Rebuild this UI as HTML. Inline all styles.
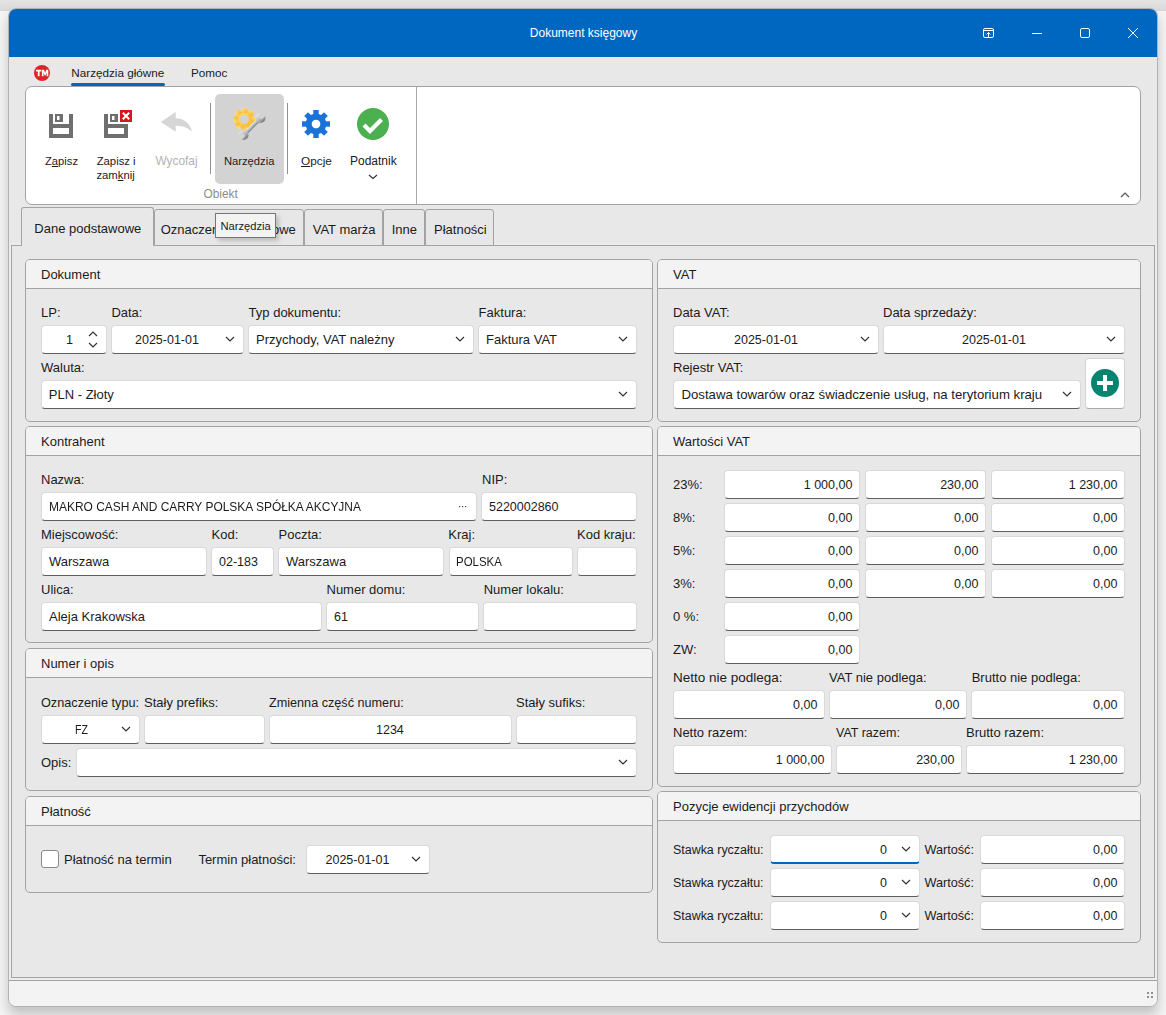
<!DOCTYPE html><html><head><meta charset="utf-8"><style>
*{margin:0;padding:0;box-sizing:border-box}
html,body{width:1166px;height:1015px;overflow:hidden;background:#f4f4f4;font-family:"Liberation Sans", sans-serif;color:#1b1b1b}
.t{position:absolute;white-space:nowrap;line-height:16px}
.a{position:absolute}
.ic{position:absolute;line-height:0}
.inp{position:absolute;background:#fff;border:1px solid #d9d9d9;border-bottom:1px solid #5e5e5e;border-radius:4px}
.inp.focus{border-bottom:2px solid #0067c0}
.grp{position:absolute;border:1px solid #a3a3a3;border-radius:5px;background:#e8e8e8;overflow:hidden}
.gh{position:absolute;left:0;top:0;right:0;height:29px;background:#f3f3f3;border-bottom:1px solid #a3a3a3}
</style></head><body>
<div class="a" style="left:0;top:0;width:1166px;height:11px;background:linear-gradient(180deg,#e4e4e4,#dadada);border-bottom:1px solid #d6d6d6"></div>
<div class="a" style="left:8px;top:8px;width:1150px;height:999px;background:#e8e8e8;border:1px solid #b2b2b2;border-radius:8px;overflow:hidden;box-shadow:0 8px 12px rgba(0,0,0,0.2)"><div class="a" style="left:0;top:0;width:1148px;height:48px;background:#0067c0"></div><div class="a" style="left:0;top:971px;width:1148px;height:1px;background:#a3a3a3"></div><div class="a" style="left:0;top:972px;width:1148px;height:26px;background:#f3f3f3"></div></div>
<div class="t " style="left:529.8px;top:25px;font-size:12px;color:#fff;">Dokument księgowy</div>
<svg class="a" style="left:975px;top:20px" width="170" height="26" viewBox="975 20 170 26">
<g fill="none" stroke="#fff" stroke-width="1">
<rect x="983.5" y="28.5" width="10" height="9" rx="1.5"/>
<path d="M984 30.5 H993"/>
<path d="M988.5 37 V32.5 M986.5 34.5 L988.5 32.5 L990.5 34.5"/>
<path d="M1032 33.5 H1042"/>
<rect x="1080.5" y="28.5" width="9" height="9" rx="1.5"/>
<path d="M1128 28 L1138 38 M1138 28 L1128 38"/>
</g></svg>
<svg class="a" style="left:32px;top:63px" width="20" height="20" viewBox="32 63 20 20"><circle cx="42" cy="73" r="8" fill="#e02328"/><path fill="#fff" d="M36 69.7 H41.3 V71.4 H39.6 V76.2 H37.8 V71.4 H36 Z M41.9 69.7 H44 L45.1 73 L46.2 69.7 H48.3 V76.2 H46.7 V72.3 L45.6 75.6 H44.6 L43.5 72.3 V76.2 H41.9 Z"/></svg>
<div class="t " style="left:71.3px;top:65px;font-size:11.7px;">Narzędzia główne</div>
<div class="a" style="left:71px;top:83px;width:94px;height:3px;border-radius:2px;background:#0067c0"></div>
<div class="t " style="left:191px;top:65px;font-size:11.7px;">Pomoc</div>
<div class="a" style="left:25px;top:86px;width:1116px;height:119px;background:#fff;border:1px solid #a3a3a3;border-radius:7px"></div>
<div class="a" style="left:416px;top:87px;width:1px;height:117px;background:#a9a9a9"></div>
<div class="a" style="left:215px;top:94px;width:69px;height:90px;background:#d3d3d3;border-radius:5px"></div>
<div class="a" style="left:210px;top:103px;width:1px;height:71px;background:#8f8f8f"></div>
<div class="a" style="left:287px;top:103px;width:1px;height:71px;background:#8f8f8f"></div>
<svg class="a" style="left:40px;top:100px" width="360" height="90" viewBox="40 100 360 90">
<g fill="#6f6f6f">
<path d="M49 114 H53 V124 H69 V114 H73 V138 H49 Z M53 128 V134 H69 V128 Z"/>
<path d="M55 114 H63 V122 H55 Z M57 116 V120 H59.5 V116 Z" fill-rule="evenodd"/>
<path d="M104 114 H108 V124 H128 V138 H104 Z M108 128 V134 H124 V128 Z" fill-rule="evenodd"/>
<path d="M110 114 H118 V122 H110 Z M112 116 V120 H114.5 V116 Z" fill-rule="evenodd"/>
</g>
<rect x="120" y="110" width="12" height="12" fill="#d9141b"/>
<path d="M122.8 112.8 L129.2 119.2 M129.2 112.8 L122.8 119.2" stroke="#fff" stroke-width="2"/>
<path d="M160.8 122 L175.7 112.1 V118.3 C183.5 118.3 190 123 192.2 131.8 C188 127.8 183 125.8 175.7 125.8 V131.7 Z" fill="#d6d6d6"/>
<g transform="translate(316 124)" fill="#1a73d6"><path d="M0 -10.3 A10.3 10.3 0 1 1 -0.01 -10.3 Z M0 -4.3 A4.3 4.3 0 1 0 0.01 -4.3 Z" fill-rule="evenodd"/><rect x="-2.7" y="-14" width="5.4" height="6" transform="rotate(0)"/><rect x="-2.7" y="-14" width="5.4" height="6" transform="rotate(45)"/><rect x="-2.7" y="-14" width="5.4" height="6" transform="rotate(90)"/><rect x="-2.7" y="-14" width="5.4" height="6" transform="rotate(135)"/><rect x="-2.7" y="-14" width="5.4" height="6" transform="rotate(180)"/><rect x="-2.7" y="-14" width="5.4" height="6" transform="rotate(225)"/><rect x="-2.7" y="-14" width="5.4" height="6" transform="rotate(270)"/><rect x="-2.7" y="-14" width="5.4" height="6" transform="rotate(315)"/></g>
<circle cx="373" cy="124" r="16" fill="#4caf50"/>
<path d="M364 125 L370 131 L381.5 119.5" fill="none" stroke="#fff" stroke-width="4.2"/>
<path d="M369 175 L373 178.5 L377 175" fill="none" stroke="#333" stroke-width="1.2"/>
</g></svg>
<svg class="a" style="left:228px;top:104px" width="40" height="40" viewBox="228 104 40 40">
<defs>
<linearGradient id="gg" x1="0" y1="0" x2="1" y2="1"><stop offset="0" stop-color="#fee28e"/><stop offset="1" stop-color="#f6b41c"/></linearGradient>
<linearGradient id="wr" x1="0" y1="0" x2="0" y2="1"><stop offset="0" stop-color="#e6e6e6"/><stop offset="0.55" stop-color="#b8b8b8"/><stop offset="1" stop-color="#6f777e"/></linearGradient>
</defs>
<g transform="translate(244.5 119.4)" fill="url(#gg)">
<circle r="9.3"/><rect x="-2.9" y="-11.4" width="5.8" height="5" rx="1.5" transform="rotate(0)"/><rect x="-2.9" y="-11.4" width="5.8" height="5" rx="1.5" transform="rotate(45)"/><rect x="-2.9" y="-11.4" width="5.8" height="5" rx="1.5" transform="rotate(90)"/><rect x="-2.9" y="-11.4" width="5.8" height="5" rx="1.5" transform="rotate(135)"/><rect x="-2.9" y="-11.4" width="5.8" height="5" rx="1.5" transform="rotate(180)"/><rect x="-2.9" y="-11.4" width="5.8" height="5" rx="1.5" transform="rotate(225)"/><rect x="-2.9" y="-11.4" width="5.8" height="5" rx="1.5" transform="rotate(270)"/><rect x="-2.9" y="-11.4" width="5.8" height="5" rx="1.5" transform="rotate(315)"/>
<circle r="4.4" fill="#d3d3d3"/>
</g>
<g transform="translate(252 126.5) rotate(-45)">
<g fill="url(#wr)">
<rect x="-10" y="-2" width="20" height="4"/>
<circle cx="-12" cy="0" r="5"/>
<circle cx="12" cy="0" r="5"/>
</g>
<g fill="#d3d3d3">
<rect x="-18" y="-2" width="6.5" height="4" rx="1"/>
<rect x="11.5" y="-2" width="6.5" height="4" rx="1"/>
</g>
</g>
</svg>
<div class="t " style="left:45px;top:153px;font-size:11.2px;">Z<span style="text-decoration:underline;text-underline-offset:1px">a</span>pisz</div>
<div class="t " style="left:96.7px;top:153px;font-size:11.3px;">Zapisz i</div>
<div class="t " style="left:96.4px;top:167px;font-size:11.3px;">zam<span style="text-decoration:underline;text-underline-offset:1px">k</span>nij</div>
<div class="t " style="left:155.4px;top:153px;font-size:11.9px;color:#b3b3b3;">Wycofaj</div>
<div class="t " style="left:224px;top:153px;font-size:11.2px;">Narzędzia</div>
<div class="t " style="left:301px;top:153px;font-size:11.8px;"><span style="text-decoration:underline;text-underline-offset:1px">O</span>pcje</div>
<div class="t " style="left:350px;top:153px;font-size:12px;">Podatnik</div>
<div class="t " style="left:203.5px;top:186px;font-size:11.9px;color:#8c8c8c;">Obiekt</div>
<svg class="a" style="left:1118px;top:188px" width="14" height="12" viewBox="1118 188 14 12"><path d="M1121 197 L1125 193 L1129 197" fill="none" stroke="#555" stroke-width="1.2"/></svg>
<div class="a" style="left:11px;top:245px;width:1144px;height:733px;border:1px solid #a3a3a3;background:#e8e8e8;box-shadow:0 0 0 2px #ededed"></div>
<div class="a" style="left:154px;top:209px;width:150px;height:37px;border:1px solid #a3a3a3;border-radius:3px 3px 0 0;background:#e7e7e7"></div>
<div class="t " style="left:160.7px;top:222px;font-size:13px;">Oznaczenia dodatkowe</div>
<div class="a" style="left:304px;top:209px;width:79px;height:37px;border:1px solid #a3a3a3;border-radius:3px 3px 0 0;background:#e7e7e7"></div>
<div class="t " style="left:312.7px;top:222px;font-size:13px;">VAT marża</div>
<div class="a" style="left:383px;top:209px;width:42px;height:37px;border:1px solid #a3a3a3;border-radius:3px 3px 0 0;background:#e7e7e7"></div>
<div class="t " style="left:391.7px;top:222px;font-size:13px;">Inne</div>
<div class="a" style="left:425px;top:209px;width:69px;height:37px;border:1px solid #a3a3a3;border-radius:3px 3px 0 0;background:#e7e7e7"></div>
<div class="t " style="left:434px;top:222px;font-size:13px;">Płatności</div>
<div class="a" style="left:21px;top:207px;width:133px;height:39px;border:1px solid #a3a3a3;border-bottom:none;border-radius:3px 3px 0 0;background:#e8e8e8"></div>
<div class="a" style="left:22px;top:245px;width:131px;height:1px;background:#e8e8e8"></div>
<div class="t " style="left:34.3px;top:221px;font-size:13px;">Dane podstawowe</div>
<div class="grp" style="left:25px;top:259px;width:628px;height:163px"><div class="gh"></div></div>
<div class="t " style="left:41px;top:267px;font-size:13px;">Dokument</div>
<div class="grp" style="left:25px;top:426px;width:628px;height:217px"><div class="gh"></div></div>
<div class="t " style="left:41px;top:434px;font-size:13px;">Kontrahent</div>
<div class="grp" style="left:25px;top:648px;width:628px;height:143px"><div class="gh"></div></div>
<div class="t " style="left:41px;top:656px;font-size:13px;">Numer i opis</div>
<div class="grp" style="left:25px;top:796px;width:628px;height:97px"><div class="gh"></div></div>
<div class="t " style="left:41px;top:804px;font-size:13px;">Płatność</div>
<div class="grp" style="left:657px;top:259px;width:484px;height:163px"><div class="gh"></div></div>
<div class="t " style="left:673px;top:267px;font-size:13px;">VAT</div>
<div class="grp" style="left:657px;top:426px;width:484px;height:361px"><div class="gh"></div></div>
<div class="t " style="left:673px;top:434px;font-size:13px;">Wartości VAT</div>
<div class="grp" style="left:657px;top:791px;width:484px;height:152px"><div class="gh"></div></div>
<div class="t " style="left:673px;top:799px;font-size:13px;">Pozycje ewidencji przychodów</div>
<div class="t " style="left:41px;top:305px;font-size:13px;">LP:</div>
<div class="t " style="left:111.4px;top:305px;font-size:13px;">Data:</div>
<div class="t " style="left:248.6px;top:305px;font-size:13px;">Typ dokumentu:</div>
<div class="t " style="left:478.6px;top:305px;font-size:13px;">Faktura:</div>
<div class="inp" style="left:41px;top:325px;width:66px;height:29px"></div>
<div class="t " style="left:-127px;top:332px;font-size:12.5px;width:200px;text-align:right;">1</div>
<svg class="a" style="left:86px;top:329px" width="14" height="22" viewBox="86 329 14 22"><path d="M89 336 L93 332 L97 336 M89 343 L93 347 L97 343" fill="none" stroke="#333" stroke-width="1.2"/></svg>
<div class="inp" style="left:111px;top:325px;width:133px;height:29px"></div>
<div class="t " style="left:135px;top:332px;font-size:12.5px;">2025-01-01</div>
<div class="ic" style="left:225px;top:336.0px"><svg width="10" height="6" viewBox="0 0 10 6"><path d="M1 1 L5 5 L9 1" fill="none" stroke="#333" stroke-width="1.2"/></svg></div>
<div class="inp" style="left:248px;top:325px;width:226px;height:29px"></div>
<div class="t " style="left:256px;top:332px;font-size:13px;">Przychody, VAT należny</div>
<div class="ic" style="left:455px;top:336.0px"><svg width="10" height="6" viewBox="0 0 10 6"><path d="M1 1 L5 5 L9 1" fill="none" stroke="#333" stroke-width="1.2"/></svg></div>
<div class="inp" style="left:478px;top:325px;width:159px;height:29px"></div>
<div class="t " style="left:486px;top:332px;font-size:13px;">Faktura VAT</div>
<div class="ic" style="left:618px;top:336.0px"><svg width="10" height="6" viewBox="0 0 10 6"><path d="M1 1 L5 5 L9 1" fill="none" stroke="#333" stroke-width="1.2"/></svg></div>
<div class="t " style="left:41px;top:360px;font-size:13px;">Waluta:</div>
<div class="inp" style="left:41px;top:380px;width:596px;height:29px"></div>
<div class="t " style="left:48.8px;top:387px;font-size:13px;">PLN - Złoty</div>
<div class="ic" style="left:618px;top:391.0px"><svg width="10" height="6" viewBox="0 0 10 6"><path d="M1 1 L5 5 L9 1" fill="none" stroke="#333" stroke-width="1.2"/></svg></div>
<div class="t " style="left:41px;top:472px;font-size:13px;">Nazwa:</div>
<div class="t " style="left:482px;top:472px;font-size:13px;">NIP:</div>
<div class="inp" style="left:41px;top:492px;width:436px;height:29px"></div>
<div class="t " style="left:49px;top:499px;font-size:13px;transform:scaleX(0.92);transform-origin:0 0;">MAKRO CASH AND CARRY POLSKA SPÓŁKA AKCYJNA</div>
<svg class="a" style="left:455px;top:503px" width="14" height="6" viewBox="455 503 14 6"><g fill="#444"><rect x="459" y="506" width="1.2" height="1.2"/><rect x="462" y="506" width="1.2" height="1.2"/><rect x="465" y="506" width="1.2" height="1.2"/></g></svg>
<div class="inp" style="left:481px;top:492px;width:156px;height:29px"></div>
<div class="t " style="left:489px;top:499px;font-size:12.5px;">5220002860</div>
<div class="t " style="left:41px;top:527px;font-size:13px;">Miejscowość:</div>
<div class="t " style="left:211.5px;top:527px;font-size:13px;">Kod:</div>
<div class="t " style="left:278.5px;top:527px;font-size:13px;">Poczta:</div>
<div class="t " style="left:448.3px;top:527px;font-size:13px;">Kraj:</div>
<div class="t " style="left:577px;top:527px;font-size:13px;">Kod kraju:</div>
<div class="inp" style="left:41px;top:547px;width:166px;height:29px"></div>
<div class="t " style="left:49px;top:554px;font-size:13px;">Warszawa</div>
<div class="inp" style="left:211px;top:547px;width:63px;height:29px"></div>
<div class="t " style="left:219px;top:554px;font-size:12.5px;">02-183</div>
<div class="inp" style="left:278px;top:547px;width:166px;height:29px"></div>
<div class="t " style="left:286px;top:554px;font-size:13px;">Warszawa</div>
<div class="inp" style="left:449px;top:547px;width:124px;height:29px"></div>
<div class="t " style="left:456px;top:554px;font-size:13px;transform:scaleX(0.88);transform-origin:0 0;">POLSKA</div>
<div class="inp" style="left:577px;top:547px;width:60px;height:29px"></div>
<div class="t " style="left:41px;top:582px;font-size:13px;">Ulica:</div>
<div class="t " style="left:326.5px;top:582px;font-size:13px;">Numer domu:</div>
<div class="t " style="left:483.7px;top:582px;font-size:13px;">Numer lokalu:</div>
<div class="inp" style="left:41px;top:602px;width:281px;height:29px"></div>
<div class="t " style="left:49px;top:609px;font-size:13px;">Aleja Krakowska</div>
<div class="inp" style="left:326px;top:602px;width:153px;height:29px"></div>
<div class="t " style="left:334px;top:609px;font-size:12.5px;">61</div>
<div class="inp" style="left:483px;top:602px;width:154px;height:29px"></div>
<div class="t " style="left:41px;top:695px;font-size:12.7px;">Oznaczenie typu:</div>
<div class="t " style="left:144px;top:695px;font-size:13px;">Stały prefiks:</div>
<div class="t " style="left:269px;top:695px;font-size:12.65px;">Zmienna część numeru:</div>
<div class="t " style="left:516px;top:695px;font-size:13px;">Stały sufiks:</div>
<div class="inp" style="left:41px;top:715px;width:99px;height:29px"></div>
<div class="t " style="left:75px;top:722px;font-size:13px;transform:scaleX(0.81);transform-origin:0 0;">FZ</div>
<div class="ic" style="left:121px;top:726.0px"><svg width="10" height="6" viewBox="0 0 10 6"><path d="M1 1 L5 5 L9 1" fill="none" stroke="#333" stroke-width="1.2"/></svg></div>
<div class="inp" style="left:144px;top:715px;width:121px;height:29px"></div>
<div class="inp" style="left:269px;top:715px;width:243px;height:29px"></div>
<div class="t " style="left:376px;top:722px;font-size:12.5px;">1234</div>
<div class="inp" style="left:516px;top:715px;width:121px;height:29px"></div>
<div class="t " style="left:41px;top:755px;font-size:13px;">Opis:</div>
<div class="inp" style="left:76px;top:748px;width:561px;height:29px"></div>
<div class="ic" style="left:618px;top:759.0px"><svg width="10" height="6" viewBox="0 0 10 6"><path d="M1 1 L5 5 L9 1" fill="none" stroke="#333" stroke-width="1.2"/></svg></div>
<div class="a" style="left:41px;top:850px;width:18px;height:18px;border:1px solid #8a8a8a;border-radius:3px;background:#fff"></div>
<div class="t " style="left:64px;top:852px;font-size:13px;">Płatność na termin</div>
<div class="t " style="left:198.4px;top:852px;font-size:13px;">Termin płatności:</div>
<div class="inp" style="left:306px;top:845px;width:124px;height:29px"></div>
<div class="t " style="left:325.5px;top:852px;font-size:12.5px;">2025-01-01</div>
<div class="ic" style="left:411px;top:856.0px"><svg width="10" height="6" viewBox="0 0 10 6"><path d="M1 1 L5 5 L9 1" fill="none" stroke="#333" stroke-width="1.2"/></svg></div>
<div class="t " style="left:673px;top:305px;font-size:13px;">Data VAT:</div>
<div class="t " style="left:883px;top:305px;font-size:13px;">Data sprzedaży:</div>
<div class="inp" style="left:673px;top:325px;width:206px;height:29px"></div>
<div class="t " style="left:734px;top:332px;font-size:12.5px;">2025-01-01</div>
<div class="ic" style="left:860px;top:336.0px"><svg width="10" height="6" viewBox="0 0 10 6"><path d="M1 1 L5 5 L9 1" fill="none" stroke="#333" stroke-width="1.2"/></svg></div>
<div class="inp" style="left:883px;top:325px;width:242px;height:29px"></div>
<div class="t " style="left:962px;top:332px;font-size:12.5px;">2025-01-01</div>
<div class="ic" style="left:1106px;top:336.0px"><svg width="10" height="6" viewBox="0 0 10 6"><path d="M1 1 L5 5 L9 1" fill="none" stroke="#333" stroke-width="1.2"/></svg></div>
<div class="t " style="left:673px;top:360px;font-size:13px;">Rejestr VAT:</div>
<div class="inp" style="left:673px;top:380px;width:408px;height:29px"></div>
<div class="t " style="left:681.5px;top:387px;font-size:13.2px;">Dostawa towarów oraz świadczenie usług, na terytorium kraju</div>
<div class="ic" style="left:1062px;top:391.0px"><svg width="10" height="6" viewBox="0 0 10 6"><path d="M1 1 L5 5 L9 1" fill="none" stroke="#333" stroke-width="1.2"/></svg></div>
<div class="a" style="left:1085px;top:358px;width:40px;height:51px;background:#fff;border:1px solid #d3d3d3;border-bottom-color:#a9a9a9;border-radius:4px"></div>
<svg class="a" style="left:1090px;top:368px" width="30" height="30" viewBox="1090 368 30 30"><circle cx="1105" cy="383" r="14" fill="#06846f"/><path d="M1105 375 V391 M1097 383 H1113" stroke="#fff" stroke-width="4"/></svg>
<div class="t " style="left:673px;top:477px;font-size:13px;">23%:</div>
<div class="inp" style="left:724px;top:470px;width:136px;height:29px"></div>
<div class="t " style="left:652.4px;top:477px;font-size:12.5px;width:200px;text-align:right;">1 000,00</div>
<div class="inp" style="left:865px;top:470px;width:121px;height:29px"></div>
<div class="t " style="left:778.4px;top:477px;font-size:12.5px;width:200px;text-align:right;">230,00</div>
<div class="inp" style="left:991px;top:470px;width:134px;height:29px"></div>
<div class="t " style="left:917.4000000000001px;top:477px;font-size:12.5px;width:200px;text-align:right;">1 230,00</div>
<div class="t " style="left:673px;top:510px;font-size:13px;">8%:</div>
<div class="inp" style="left:724px;top:503px;width:136px;height:29px"></div>
<div class="t " style="left:652.4px;top:510px;font-size:12.5px;width:200px;text-align:right;">0,00</div>
<div class="inp" style="left:865px;top:503px;width:121px;height:29px"></div>
<div class="t " style="left:778.4px;top:510px;font-size:12.5px;width:200px;text-align:right;">0,00</div>
<div class="inp" style="left:991px;top:503px;width:134px;height:29px"></div>
<div class="t " style="left:917.4000000000001px;top:510px;font-size:12.5px;width:200px;text-align:right;">0,00</div>
<div class="t " style="left:673px;top:543px;font-size:13px;">5%:</div>
<div class="inp" style="left:724px;top:536px;width:136px;height:29px"></div>
<div class="t " style="left:652.4px;top:543px;font-size:12.5px;width:200px;text-align:right;">0,00</div>
<div class="inp" style="left:865px;top:536px;width:121px;height:29px"></div>
<div class="t " style="left:778.4px;top:543px;font-size:12.5px;width:200px;text-align:right;">0,00</div>
<div class="inp" style="left:991px;top:536px;width:134px;height:29px"></div>
<div class="t " style="left:917.4000000000001px;top:543px;font-size:12.5px;width:200px;text-align:right;">0,00</div>
<div class="t " style="left:673px;top:576px;font-size:13px;">3%:</div>
<div class="inp" style="left:724px;top:569px;width:136px;height:29px"></div>
<div class="t " style="left:652.4px;top:576px;font-size:12.5px;width:200px;text-align:right;">0,00</div>
<div class="inp" style="left:865px;top:569px;width:121px;height:29px"></div>
<div class="t " style="left:778.4px;top:576px;font-size:12.5px;width:200px;text-align:right;">0,00</div>
<div class="inp" style="left:991px;top:569px;width:134px;height:29px"></div>
<div class="t " style="left:917.4000000000001px;top:576px;font-size:12.5px;width:200px;text-align:right;">0,00</div>
<div class="t " style="left:673px;top:609px;font-size:13px;">0 %:</div>
<div class="inp" style="left:724px;top:602px;width:136px;height:29px"></div>
<div class="t " style="left:652.4px;top:609px;font-size:12.5px;width:200px;text-align:right;">0,00</div>
<div class="t " style="left:673px;top:642px;font-size:13px;">ZW:</div>
<div class="inp" style="left:724px;top:635px;width:136px;height:29px"></div>
<div class="t " style="left:652.4px;top:642px;font-size:12.5px;width:200px;text-align:right;">0,00</div>
<div class="t " style="left:673px;top:670px;font-size:13.5px;">Netto nie podlega:</div>
<div class="t " style="left:829px;top:670px;font-size:13px;">VAT nie podlega:</div>
<div class="t " style="left:971.7px;top:670px;font-size:13px;">Brutto nie podlega:</div>
<div class="inp" style="left:673px;top:690px;width:152px;height:29px"></div>
<div class="t " style="left:617.4px;top:697px;font-size:12.5px;width:200px;text-align:right;">0,00</div>
<div class="inp" style="left:829px;top:690px;width:138px;height:29px"></div>
<div class="t " style="left:759.4px;top:697px;font-size:12.5px;width:200px;text-align:right;">0,00</div>
<div class="inp" style="left:971px;top:690px;width:154px;height:29px"></div>
<div class="t " style="left:917.4000000000001px;top:697px;font-size:12.5px;width:200px;text-align:right;">0,00</div>
<div class="t " style="left:673px;top:725px;font-size:13px;">Netto razem:</div>
<div class="t " style="left:836px;top:725px;font-size:12.5px;">VAT razem:</div>
<div class="t " style="left:966px;top:725px;font-size:13px;">Brutto razem:</div>
<div class="inp" style="left:673px;top:745px;width:159px;height:29px"></div>
<div class="t " style="left:624.4px;top:752px;font-size:12.5px;width:200px;text-align:right;">1 000,00</div>
<div class="inp" style="left:836px;top:745px;width:126px;height:29px"></div>
<div class="t " style="left:754.4px;top:752px;font-size:12.5px;width:200px;text-align:right;">230,00</div>
<div class="inp" style="left:966px;top:745px;width:159px;height:29px"></div>
<div class="t " style="left:917.4000000000001px;top:752px;font-size:12.5px;width:200px;text-align:right;">1 230,00</div>
<div class="t " style="left:673px;top:842px;font-size:12.45px;">Stawka ryczałtu:</div>
<div class="inp focus" style="left:770px;top:835px;width:150px;height:29px"></div>
<div class="t " style="left:687px;top:842px;font-size:12.5px;width:200px;text-align:right;">0</div>
<div class="ic" style="left:901px;top:846.0px"><svg width="10" height="6" viewBox="0 0 10 6"><path d="M1 1 L5 5 L9 1" fill="none" stroke="#333" stroke-width="1.2"/></svg></div>
<div class="t " style="left:924.4px;top:842px;font-size:12.7px;">Wartość:</div>
<div class="inp" style="left:980px;top:835px;width:145px;height:29px"></div>
<div class="t " style="left:917.4000000000001px;top:842px;font-size:12.5px;width:200px;text-align:right;">0,00</div>
<div class="t " style="left:673px;top:875px;font-size:12.45px;">Stawka ryczałtu:</div>
<div class="inp" style="left:770px;top:868px;width:150px;height:29px"></div>
<div class="t " style="left:687px;top:875px;font-size:12.5px;width:200px;text-align:right;">0</div>
<div class="ic" style="left:901px;top:879.0px"><svg width="10" height="6" viewBox="0 0 10 6"><path d="M1 1 L5 5 L9 1" fill="none" stroke="#333" stroke-width="1.2"/></svg></div>
<div class="t " style="left:924.4px;top:875px;font-size:12.7px;">Wartość:</div>
<div class="inp" style="left:980px;top:868px;width:145px;height:29px"></div>
<div class="t " style="left:917.4000000000001px;top:875px;font-size:12.5px;width:200px;text-align:right;">0,00</div>
<div class="t " style="left:673px;top:908px;font-size:12.45px;">Stawka ryczałtu:</div>
<div class="inp" style="left:770px;top:901px;width:150px;height:29px"></div>
<div class="t " style="left:687px;top:908px;font-size:12.5px;width:200px;text-align:right;">0</div>
<div class="ic" style="left:901px;top:912.0px"><svg width="10" height="6" viewBox="0 0 10 6"><path d="M1 1 L5 5 L9 1" fill="none" stroke="#333" stroke-width="1.2"/></svg></div>
<div class="t " style="left:924.4px;top:908px;font-size:12.7px;">Wartość:</div>
<div class="inp" style="left:980px;top:901px;width:145px;height:29px"></div>
<div class="t " style="left:917.4000000000001px;top:908px;font-size:12.5px;width:200px;text-align:right;">0,00</div>
<div class="a" style="left:218px;top:216px;width:61px;height:25px;background:rgba(0,0,0,0.18);filter:blur(2px)"></div>
<div class="a" style="left:215px;top:213px;width:61px;height:25px;background:#f3f3f3;border:1px solid #767676"></div>
<div class="t " style="left:220.4px;top:218px;font-size:11.2px;">Narzędzia</div>
<svg class="a" style="left:1144px;top:990px" width="12" height="12" viewBox="1144 990 12 12"><g fill="#8f8f8f"><rect x="1147" y="992" width="2" height="2"/><rect x="1151" y="992" width="2" height="2"/><rect x="1147" y="996" width="2" height="2"/><rect x="1151" y="996" width="2" height="2"/></g></svg>
</body></html>
